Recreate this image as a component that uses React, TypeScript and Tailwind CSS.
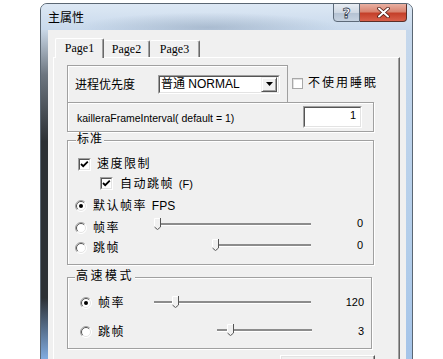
import React from "react";

function Radio({ checked = false }: { checked?: boolean }) {
  return (
    <svg width="12" height="12" viewBox="0 0 12 12" className="shrink-0">
      <circle cx="6" cy="6" r="5.5" fill="#ffffff" />
      <path d="M9.89 2.11 A5.5 5.5 0 0 0 2.11 9.89" stroke="#a0a0a0" fill="none" />
      <path d="M9.2 2.8 A4.5 4.5 0 0 0 2.8 9.2" stroke="#555555" fill="none" />
      <path d="M2.11 9.89 A5.5 5.5 0 0 0 9.89 2.11" stroke="#ffffff" fill="none" />
      <path d="M2.8 9.2 A4.5 4.5 0 0 0 9.2 2.8" stroke="#e3e3e3" fill="none" />
      {checked && <circle cx="6" cy="6" r="2" fill="#000000" />}
    </svg>
  );
}

function Check({ checked = false }: { checked?: boolean }) {
  return (
    <div className="w-[13px] h-[13px] shrink-0 border border-t-[#a0a0a0] border-l-[#a0a0a0] border-r-white border-b-white">
      <div className="w-full h-full border border-t-[#555555] border-l-[#555555] border-r-[#e3e3e3] border-b-[#e3e3e3] bg-white flex items-center justify-center">
        {checked && (
          <svg width="9" height="9" viewBox="0 0 9 9">
            <polyline points="1,4 3.2,6.2 7.8,1.6" stroke="#000" strokeWidth="1.8" fill="none" />
          </svg>
        )}
      </div>
    </div>
  );
}

function Slider({ width, trackStart, thumbX }: { width: number; trackStart: number; thumbX: number }) {
  return (
    <svg width={width} height="12" viewBox={`0 0 ${width} 12`} className="shrink-0">
      <rect x={trackStart} y="5" width={width - trackStart} height="2" fill="#8c8c8c" />
      <rect x={trackStart} y="7" width={width - trackStart} height="1" fill="#ffffff" />
      <polygon points={`${thumbX},0 ${thumbX + 7},0 ${thumbX + 7},9 ${thumbX + 3.5},12 ${thumbX},9`} fill="#f0f0f0" />
      <path d={`M${thumbX + 0.5} 9 V0.5 H${thumbX + 6}`} stroke="#ffffff" fill="none" />
      <path d={`M${thumbX + 6.5} 0 V9 L${thumbX + 3.5} 11.6 L${thumbX + 0.5} 9`} stroke="#555555" fill="none" />
    </svg>
  );
}

export default function App() {
  return (
    <div className="w-[443px] h-[359px] bg-white relative overflow-hidden text-black [font-family:'Liberation_Sans','Noto_Sans_CJK_SC',sans-serif]">
      <div className="absolute left-[40px] top-[3px] w-[373px] h-[400px] flex flex-col rounded-t-[7px] border border-[#5b6773] overflow-hidden bg-[#c8d9ec]">
        {/* Title bar */}
        <div className="relative h-[26px] shrink-0 flex items-center pl-[7px] bg-[radial-gradient(ellipse_at_45%_90%,rgba(110,130,155,0.35),transparent_45%),linear-gradient(to_bottom,#dde8f4,#c8d9ec)]">
          <span className="text-[12px] leading-none [font-family:'Noto_Sans_CJK_SC',sans-serif]">主属性</span>
          <div className="absolute right-[5px] top-[-1px] flex">
            <div className="w-[27px] h-[19px] rounded-bl-[4px] border border-[#5d6a79] bg-[linear-gradient(to_bottom,#e8edf3,#cfd8e3_50%,#b3c1d2_51%,#c6d2e0)] flex items-center justify-center">
              <span className="text-[14px] font-bold leading-none text-[#ffffff] [font-family:'DejaVu_Sans',sans-serif] [-webkit-text-stroke:0.8px_#3a4656]">?</span>
            </div>
            <div className="w-[47px] h-[19px] rounded-br-[4px] border border-l-0 border-[#5a2f28] bg-[linear-gradient(to_bottom,#e9b0a2,#d98470_45%,#c4402a_55%,#d8604a)] flex items-center justify-center">
              <svg width="13" height="11" viewBox="0 0 13 11">
                <path d="M2 1.5 L11 9.5 M11 1.5 L2 9.5" stroke="#4a1a12" strokeWidth="3.6" strokeLinecap="round" fill="none" />
                <path d="M2 1.5 L11 9.5 M11 1.5 L2 9.5" stroke="#ffffff" strokeWidth="2" strokeLinecap="round" fill="none" />
              </svg>
            </div>
          </div>
        </div>
        {/* Body */}
        <div className="flex flex-1">
          <div className="w-[7px] shrink-0 bg-[linear-gradient(to_bottom,#c9d7e6_0%,#6d7680_12%,#2c3034_30%,#2c3034_72%,#7ea8dc_88%,#a8c6ea_100%)]" />
          <div className="flex-1 bg-[#f0f0f0] pt-[8px] pl-[5px] pr-[6px] flex flex-col">
            {/* tabs */}
            <div className="flex items-end h-[19px] pl-[2px] [font-family:'Liberation_Serif',serif] text-[12px]">
              <div className="relative z-10 w-[49px] h-[20px] mb-[-1px] bg-[#f0f0f0] rounded-t-[2px] border-t border-l border-white border-r border-r-[#696969] shadow-[inset_-1px_0_0_#a0a0a0] flex items-center justify-center leading-none pb-[1px]">
                Page1
              </div>
              <div className="w-[46px] h-[17px] rounded-t-[2px] border-t border-white border-r border-r-[#696969] shadow-[inset_-1px_0_0_#a0a0a0] flex items-center justify-center leading-none">
                Page2
              </div>
              <div className="w-[50px] h-[17px] rounded-t-[2px] border-t border-white border-r border-r-[#696969] shadow-[inset_-1px_0_0_#a0a0a0] flex items-center justify-center leading-none">
                Page3
              </div>
            </div>
            {/* panel */}
            <div className="flex-1 border-t border-l border-white border-r border-r-[#696969] shadow-[inset_-1px_0_0_#a0a0a0] pl-[13px] pt-[7px] flex flex-col items-start">
              {/* Row A */}
              <div className="flex">
                <div className="w-[221px] h-[37px] border-t border-l border-r border-[#a0a0a0] shadow-[inset_1px_1px_0_#ffffff] flex items-center pl-[7px]">
                  <span className="w-[83px] text-[12px] leading-none [font-family:'Noto_Sans_CJK_SC',sans-serif]">进程优先度</span>
                  <div className="w-[122px] h-[19px] border border-t-[#a0a0a0] border-l-[#a0a0a0] border-r-white border-b-white">
                    <div className="w-full h-full border border-t-[#555555] border-l-[#555555] border-r-[#e3e3e3] border-b-[#e3e3e3] bg-white flex items-center pl-[1px] pr-[1px]">
                      <span className="flex-1 text-[12px] leading-none">普通 NORMAL</span>
                      <div className="w-[16px] h-[15px] border border-t-[#f0f0f0] border-l-[#f0f0f0] border-r-[#555555] border-b-[#555555] bg-[#f0f0f0] shadow-[inset_1px_1px_0_#ffffff,inset_-1px_-1px_0_#a0a0a0] flex items-center justify-center">
                        <svg width="7" height="4" viewBox="0 0 7 4">
                          <polygon points="0,0 7,0 3.5,4" fill="#000" />
                        </svg>
                      </div>
                    </div>
                  </div>
                </div>
                <div className="ml-[4px] h-[37px] flex items-center gap-[5px] pb-[1px]">
                  <div className="w-[11px] h-[11px] border border-[#a8a8a8] bg-white shadow-[inset_1px_1px_0_#e0e0e0]" />
                  <span className="text-[12px] leading-none tracking-[2px]">不使用睡眠</span>
                </div>
              </div>
              {/* Row B */}
              <div className="w-[307px] h-[30px] border border-[#a0a0a0] shadow-[inset_1px_1px_0_#ffffff,1px_1px_0_#ffffff] flex items-center justify-between pl-[9px] pr-[11px]">
                <span className="text-[10.5px] leading-none pt-[2px]">kailleraFrameInterval( default = 1)</span>
                <div className="w-[59px] h-[22px] border border-t-[#a0a0a0] border-l-[#a0a0a0] border-r-white border-b-white">
                  <div className="w-full h-full border border-t-[#555555] border-l-[#555555] border-r-[#e3e3e3] border-b-[#e3e3e3] bg-white flex justify-end items-start pt-[2px] pr-[4px]">
                    <span className="text-[11px] leading-none">1</span>
                  </div>
                </div>
              </div>
              {/* 标准 group */}
              <div className="relative mt-[8px] w-[307px] h-[125px] border border-[#a0a0a0] shadow-[inset_1px_1px_0_#ffffff,1px_1px_0_#ffffff] pt-[13px] flex flex-col text-[12px] leading-none">
                <span className="absolute left-[8px] top-[-8px] px-[1px] bg-[#f0f0f0] tracking-[1px] leading-none">标准</span>
                <div className="h-[20px] flex items-center pl-[10px] gap-[6px]">
                  <Check checked />
                  <span className="tracking-[1.5px]">速度限制</span>
                </div>
                <div className="h-[19px] flex items-center pl-[32px] gap-[7px]">
                  <Check checked />
                  <span className="tracking-[1.5px]">自动跳帧 <span className="tracking-normal text-[11px]">(F)</span></span>
                </div>
                <div className="mt-[3px] h-[20px] flex items-center pl-[7px] gap-[6px]">
                  <Radio checked />
                  <span className="tracking-[1.5px]">默认帧率 <span className="tracking-normal">FPS</span></span>
                </div>
                <div className="mt-[2px] h-[20px] flex items-center">
                  <div className="w-[86px] flex items-center pl-[7px] gap-[6px]">
                    <Radio />
                    <span className="tracking-[1.5px]">帧率</span>
                  </div>
                  <div className="mb-[8px] flex">
                    <Slider width={157} trackStart={1} thumbX={0} />
                  </div>
                  <span className="flex-1 text-right pr-[10px] mb-[10px] text-[11px]">0</span>
                </div>
                <div className="h-[20px] flex items-center">
                  <div className="w-[86px] flex items-center pl-[7px] gap-[6px]">
                    <Radio />
                    <span className="tracking-[1.5px]">跳帧</span>
                  </div>
                  <div className="mb-[6px] flex">
                    <Slider width={157} trackStart={58} thumbX={58} />
                  </div>
                  <span className="flex-1 text-right pr-[10px] mb-[6px] text-[11px]">0</span>
                </div>
              </div>
              {/* 高速模式 group */}
              <div className="relative mt-[12px] w-[305px] h-[72px] border border-[#a0a0a0] shadow-[inset_1px_1px_0_#ffffff,1px_1px_0_#ffffff] pt-[15px] flex flex-col text-[12px] leading-none">
                <span className="absolute left-[7px] top-[-8px] px-[1px] bg-[#f0f0f0] tracking-[2.5px] leading-none">高速模式</span>
                <div className="h-[20px] flex items-center">
                  <div className="w-[86px] flex items-center pl-[12px] gap-[6px]">
                    <Radio checked />
                    <span className="tracking-[1.5px]">帧率</span>
                  </div>
                  <div className="mb-[2px] flex">
                    <Slider width={157} trackStart={0} thumbX={18} />
                  </div>
                  <span className="flex-1 text-right pr-[7px] mb-[2px] text-[11px]">120</span>
                </div>
                <div className="mt-[9px] h-[20px] flex items-center">
                  <div className="w-[86px] flex items-center pl-[12px] gap-[6px]">
                    <Radio />
                    <span className="tracking-[1.5px]">跳帧</span>
                  </div>
                  <div className="mb-[4px] flex">
                    <Slider width={158} trackStart={63} thumbX={73} />
                  </div>
                  <span className="flex-1 text-right pr-[7px] mb-[2px] text-[11px]">3</span>
                </div>
              </div>
              {/* button */}
              <div className="mt-[6px] ml-[213px] w-[95px] h-[23px] border border-t-white border-l-white border-r-[#555555] border-b-[#555555] shadow-[inset_-1px_-1px_0_#a0a0a0,inset_1px_1px_0_#e3e3e3] bg-[#f0f0f0]" />
            </div>
          </div>
          <div className="w-[6px] shrink-0 bg-[linear-gradient(to_bottom,#c6d8ec,#b2cdea_60%,#9fc0e8)]" />
        </div>
      </div>
    </div>
  );
}
